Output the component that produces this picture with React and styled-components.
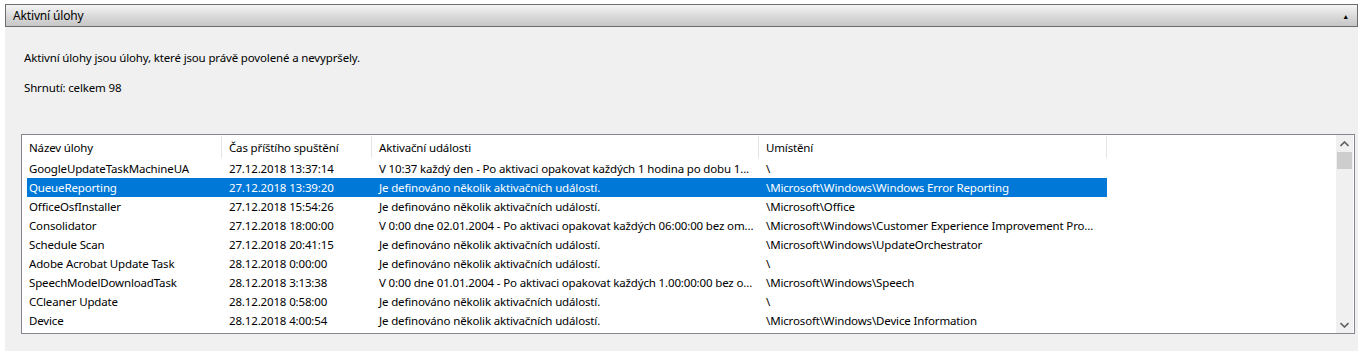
import React from "react";
import styled, { createGlobalStyle } from "styled-components";

const GlobalStyle = createGlobalStyle`
  html, body {
    margin: 0;
    background: #ffffff;
  }
  body {
    font-family: "Noto Sans", "Open Sans", sans-serif;
    font-size: 11.5px;
    letter-spacing: -0.15px;
    color: #000;
  }
`;

const columns = [
  { title: "Název úlohy", width: 200 },
  { title: "Čas příštího spuštění", width: 150 },
  { title: "Aktivační události", width: 387 },
  { title: "Umístění", width: 348 }
];

const tasks = [
  ["GoogleUpdateTaskMachineUA", "27.12.2018 13:37:14", "V 10:37 každý den - Po aktivaci opakovat každých 1 hodina po dobu 1...", "\\"],
  ["QueueReporting", "27.12.2018 13:39:20", "Je definováno několik aktivačních událostí.", "\\Microsoft\\Windows\\Windows Error Reporting"],
  ["OfficeOsfInstaller", "27.12.2018 15:54:26", "Je definováno několik aktivačních událostí.", "\\Microsoft\\Office"],
  ["Consolidator", "27.12.2018 18:00:00", "V 0:00 dne 02.01.2004 - Po aktivaci opakovat každých 06:00:00 bez om...", "\\Microsoft\\Windows\\Customer Experience Improvement Pro..."],
  ["Schedule Scan", "27.12.2018 20:41:15", "Je definováno několik aktivačních událostí.", "\\Microsoft\\Windows\\UpdateOrchestrator"],
  ["Adobe Acrobat Update Task", "28.12.2018 0:00:00", "Je definováno několik aktivačních událostí.", "\\"],
  ["SpeechModelDownloadTask", "28.12.2018 3:13:38", "V 0:00 dne 01.01.2004 - Po aktivaci opakovat každých 1.00:00:00 bez o...", "\\Microsoft\\Windows\\Speech"],
  ["CCleaner Update", "28.12.2018 0:58:00", "Je definováno několik aktivačních událostí.", "\\"],
  ["Device", "28.12.2018 4:00:54", "Je definováno několik aktivačních událostí.", "\\Microsoft\\Windows\\Device Information"]
];

function App() {
  return (
    <>
      <GlobalStyle />
      <Page>
        <SectionBar>
          <span>Aktivní úlohy</span>
          <Collapse>▲</Collapse>
        </SectionBar>
        <Panel>
          <Intro>Aktivní úlohy jsou úlohy, které jsou právě povolené a nevypršely.</Intro>
          <Summary>Shrnutí: celkem 98</Summary>
          <ListBox>
            <ListArea>
              <HeaderRow>
                {columns.map((c) => (
                  <HeaderCell key={c.title} style={{ width: c.width }}>
                    {c.title}
                  </HeaderCell>
                ))}
              </HeaderRow>
              {tasks.map((row, i) => (
                <Row key={row[0]} $selected={i === 1}>
                  {row.map((cell, j) => (
                    <Cell key={j} $first={j === 0} style={{ width: j === 0 ? columns[j].width - 5 : columns[j].width }}>
                      {cell}
                    </Cell>
                  ))}
                </Row>
              ))}
            </ListArea>
            <ScrollBar>
              <ScrollArrow>
                <svg width="9" height="6" viewBox="0 0 9 6">
                  <path d="M0.5 5 L4.5 1 L8.5 5" fill="none" stroke="#606060" strokeWidth="1.6" />
                </svg>
              </ScrollArrow>
              <Thumb />
              <Track />
              <ScrollArrow>
                <svg width="9" height="6" viewBox="0 0 9 6">
                  <path d="M0.5 1 L4.5 5 L8.5 1" fill="none" stroke="#606060" strokeWidth="1.6" />
                </svg>
              </ScrollArrow>
            </ScrollBar>
          </ListBox>
        </Panel>
      </Page>
    </>
  );
}

export default App;

const Page = styled.div`
  width: 1353px;
  margin: 4px 0 0 5px;
`;

const SectionBar = styled.div`
  height: 21px;
  display: flex;
  align-items: center;
  justify-content: space-between;
  padding: 0 8px 0 7px;
  border: 1px solid #6d6d6d;
  background: linear-gradient(#f5f5f5, #d9d9d9 55%, #c6c6c6);
  font-size: 12px;
  color: #000;
`;

const Collapse = styled.span`
  font-size: 7px;
  line-height: 1;
  margin-top: 2px;
`;

const Panel = styled.div`
  background: #f0f0f0;
  padding: 22px 3px 17px 16px;
`;

const Intro = styled.p`
  margin: 0 0 13px 3px;
  line-height: 17px;
`;

const Summary = styled.p`
  margin: 0 0 38px 3px;
  line-height: 17px;
`;

const ListBox = styled.div`
  display: flex;
  height: 198px;
  border: 1px solid #828790;
  background: #fff;
`;

const ListArea = styled.div`
  flex: 1;
  overflow: hidden;
`;

const HeaderRow = styled.div`
  display: flex;
  height: 24px;
`;

const HeaderCell = styled.div`
  flex: none;
  box-sizing: border-box;
  padding: 4px 0 0 7px;
  border-right: 1px solid #e5e5e5;
  margin-top: 1px;
  height: 22px;
  color: #000;
  white-space: nowrap;
`;

const Row = styled.div`
  display: flex;
  height: 19px;
  line-height: 20px;
  width: 1080px;
  margin-left: 5px;
  background: ${(p) => (p.$selected ? "#0078d7" : "transparent")};
  color: ${(p) => (p.$selected ? "#fff" : "#000")};
`;

const Cell = styled.div`
  flex: none;
  box-sizing: border-box;
  padding-left: ${(p) => (p.$first ? "2px" : "7px")};
  white-space: nowrap;
  overflow: hidden;
`;

const ScrollBar = styled.div`
  width: 17px;
  margin-right: 1px;
  display: flex;
  flex-direction: column;
  background: #f0f0f0;
`;

const ScrollArrow = styled.div`
  height: 17px;
  display: flex;
  align-items: center;
  justify-content: center;
`;

const Thumb = styled.div`
  height: 17px;
  margin: 0 1px;
  background: #cdcdcd;
`;

const Track = styled.div`
  flex: 1;
`;
